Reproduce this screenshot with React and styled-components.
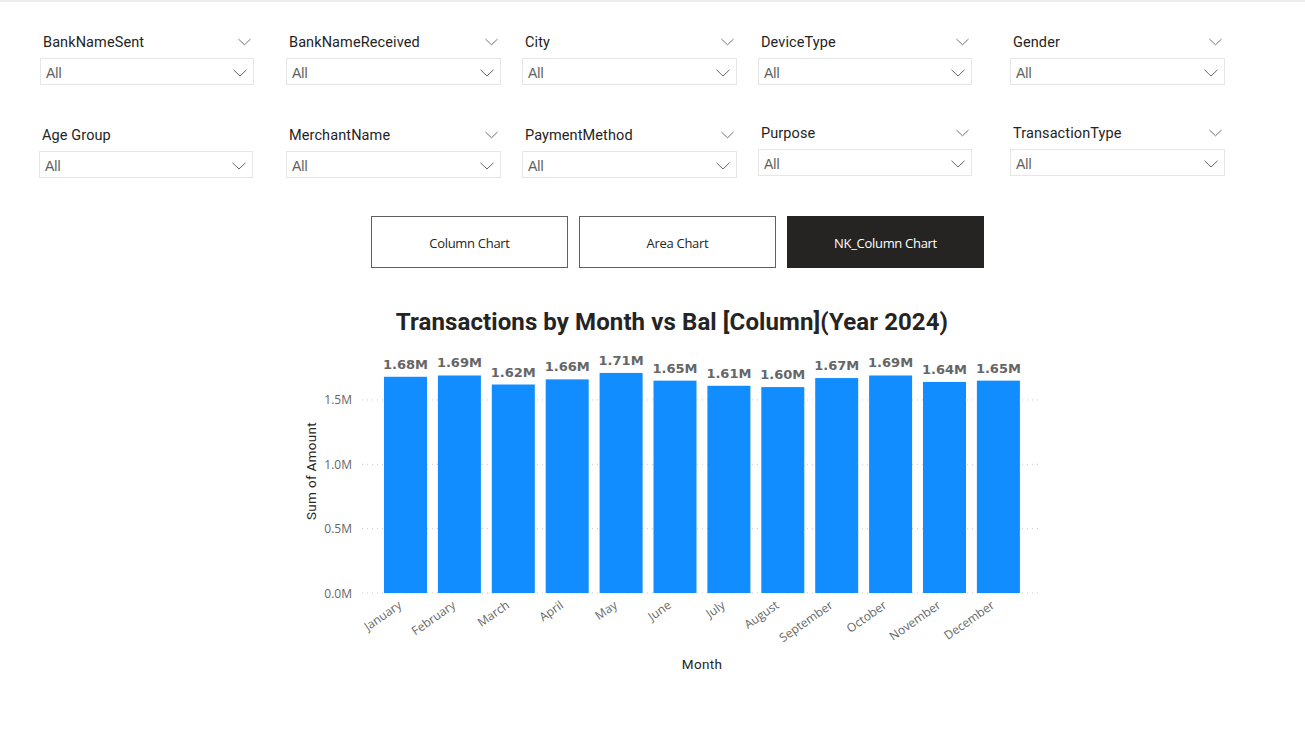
import React from "react";
import styled, { createGlobalStyle } from "styled-components";

const GlobalStyle = createGlobalStyle`
  body {
    margin: 0;
    background: #ffffff;
    font-family: "Open Sans", "Noto Sans", sans-serif;
  }
`;

const Page = styled.div`
  width: 1305px;
  height: 732px;
  overflow: hidden;
  background: #fff;
  border-top: 2px solid #ececec;
  box-sizing: border-box;
`;

const Filters = styled.div`
  padding: 30px 0 0 0;
  display: flex;
  flex-direction: column;
  gap: 40px;
`;

const FilterRow = styled.div`
  display: flex;
`;

const Slicer = styled.div`
  width: ${p => p.$w}px;
  margin-left: ${p => p.$ml}px;
  margin-top: ${p => p.$mt || 0}px;
  display: flex;
  flex-direction: column;
  gap: 6px;
`;

const SlicerHeader = styled.div`
  height: 20px;
  display: flex;
  align-items: center;
  justify-content: space-between;
  padding: 0 3px 0 3px;
`;

const SlicerTitle = styled.span`
  font-family: "Roboto", "Noto Sans", sans-serif;
  font-size: 14.5px;
  letter-spacing: 0.1px;
  color: #252423;
`;

const SlicerBox = styled.div`
  height: 27px;
  box-sizing: border-box;
  border: 1px solid #e6e6e6;
  display: flex;
  align-items: center;
  justify-content: space-between;
  padding: 3px 6px 0 5px;
`;

const SlicerValue = styled.span`
  font-family: "Liberation Sans", Arial, sans-serif;
  font-size: 14px;
  color: #605e5c;
`;

const Buttons = styled.div`
  display: flex;
  gap: 11px;
  margin: 38px 0 0 371px;
`;

const ChartButton = styled.div`
  width: 197px;
  height: 52px;
  box-sizing: border-box;
  border: 1px solid ${p => (p.$active ? "#252423" : "#606060")};
  background: ${p => (p.$active ? "#252423" : "#ffffff")};
  color: ${p => (p.$active ? "#ffffff" : "#252423")};
  display: flex;
  align-items: center;
  justify-content: center;
  font-family: "Open Sans", "Noto Sans", sans-serif;
  font-size: 13px;
  letter-spacing: -0.3px;
  padding-top: 2px;
`;

const ChartSection = styled.div`
  margin-top: 39px;
  margin-left: 295px;
  width: 760px;
`;

const ChartTitle = styled.div`
  font-family: "Roboto", "Noto Sans", sans-serif;
  font-weight: 700;
  font-size: 24px;
  line-height: 30px;
  color: #252423;
  text-align: center;
  margin-left: -6px;
  letter-spacing: 0.1px;
`;

const Chevron = ({ w = 14 }) => (
  <svg width={w} height="8" viewBox="0 0 14 8">
    <path d="M0.5 0.8 L7 7 L13.5 0.8" fill="none" stroke="#666" strokeWidth="1" />
  </svg>
);

const rows = [
  [
    { t: "BankNameSent", w: 214, ml: 40, h: true },
    { t: "BankNameReceived", w: 215, ml: 32, h: true },
    { t: "City", w: 215, ml: 21, h: true },
    { t: "DeviceType", w: 214, ml: 21, h: true },
    { t: "Gender", w: 215, ml: 38, h: true },
  ],
  [
    { t: "Age Group", w: 214, ml: 39, h: false },
    { t: "MerchantName", w: 215, ml: 33, h: true },
    { t: "PaymentMethod", w: 215, ml: 21, h: true },
    { t: "Purpose", w: 214, ml: 21, h: true, mt: -2 },
    { t: "TransactionType", w: 215, ml: 38, h: true, mt: -2 },
  ],
];

const months = [
  ["January", 1.68], ["February", 1.69], ["March", 1.62], ["April", 1.66],
  ["May", 1.71], ["June", 1.65], ["July", 1.61], ["August", 1.60],
  ["September", 1.67], ["October", 1.69], ["November", 1.64], ["December", 1.65],
];

const ZERO = 256;
const SCALE = 128.7;

const Chart = () => (
  <svg width="760" height="350" viewBox="0 0 760 350">
    {[0, 0.5, 1.0, 1.5].map(v => (
      <g key={v}>
        <line x1="67" x2="745" y1={ZERO - v * SCALE} y2={ZERO - v * SCALE}
          stroke="#c8c8c8" strokeWidth="1" strokeDasharray="1 4" />
        <text x="57" y={ZERO - v * SCALE + 4.5} textAnchor="end"
          fontFamily="Open Sans, Noto Sans, sans-serif" fontSize="12" fill="#666">
          {v.toFixed(1)}M
        </text>
      </g>
    ))}
    {months.map(([m, v], i) => {
      const x = 89 + i * 53.9;
      const top = ZERO - v * SCALE;
      const cx = x + 21.5;
      const lx = cx - 3;
      return (
        <g key={m}>
          <rect x={x} y={top} width="43" height={v * SCALE} fill="#118DFF" />
          <text x={cx} y={top - 8} textAnchor="middle"
            fontFamily="DejaVu Sans, sans-serif" fontWeight="700" fontSize="13" fill="#666">
            {v.toFixed(2)}M
          </text>
          <text x={lx} y={ZERO + 14} textAnchor="end"
            transform={`rotate(-35 ${lx} ${ZERO + 14})`}
            fontFamily="Open Sans, Noto Sans, sans-serif" fontSize="12" fill="#666">
            {m}
          </text>
        </g>
      );
    })}
    <text x="21" y="134" textAnchor="middle" transform="rotate(-90 21 134)"
      fontFamily="Roboto, Noto Sans, sans-serif" fontSize="13.5" letterSpacing="0.3" fill="#252423">
      Sum of Amount
    </text>
    <text x="407" y="332" textAnchor="middle"
      fontFamily="Roboto, Noto Sans, sans-serif" fontSize="13.5" letterSpacing="0.3" fill="#252423">
      Month
    </text>
  </svg>
);

const App = () => (
  <Page>
    <GlobalStyle />
    <Filters>
      {rows.map((row, ri) => (
        <FilterRow key={ri}>
          {row.map(s => (
            <Slicer key={s.t} $w={s.w} $ml={s.ml} $mt={s.mt}>
              <SlicerHeader>
                <SlicerTitle>{s.t}</SlicerTitle>
                {s.h && <Chevron w={13} />}
              </SlicerHeader>
              <SlicerBox>
                <SlicerValue>All</SlicerValue>
                <Chevron />
              </SlicerBox>
            </Slicer>
          ))}
        </FilterRow>
      ))}
    </Filters>
    <Buttons>
      <ChartButton>Column Chart</ChartButton>
      <ChartButton>Area Chart</ChartButton>
      <ChartButton $active>NK_Column Chart</ChartButton>
    </Buttons>
    <ChartSection>
      <ChartTitle>Transactions by Month vs Bal [Column](Year 2024)</ChartTitle>
      <Chart />
    </ChartSection>
  </Page>
);

export default App;
